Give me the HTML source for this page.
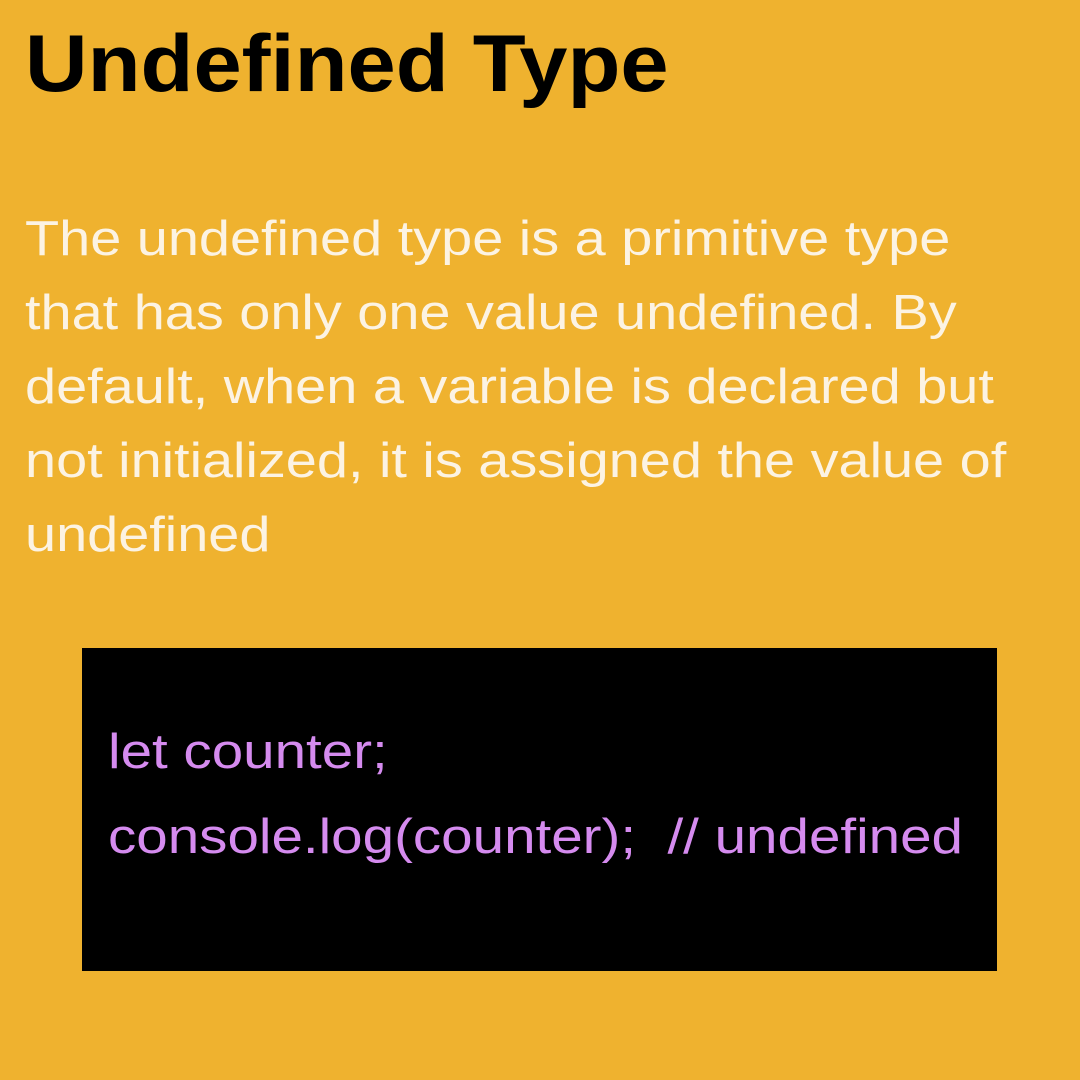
<!DOCTYPE html>
<html><head><meta charset="utf-8"><style>
html,body{margin:0;padding:0}
body{width:1080px;height:1080px;background:#EFB22F;position:relative;overflow:hidden;font-family:"Liberation Sans",sans-serif}
.t{position:absolute;left:25px;top:24px;font-size:81px;font-weight:bold;color:#000;white-space:nowrap;line-height:1;transform:scaleX(1.07);transform-origin:0 0}
.p{position:absolute;left:25px;top:202px;font-size:49px;color:#FCF3E3;line-height:74px;white-space:nowrap;transform:scaleX(1.14);transform-origin:0 0}
.box{position:absolute;left:82px;top:648px;width:915px;height:323px;background:#000}
.c{position:absolute;left:108px;top:710px;font-size:49px;color:#D58BEF;line-height:85px;white-space:pre;transform:scaleX(1.154);transform-origin:0 0}
</style></head><body>
<div class="t">Undefined Type</div>
<div class="p">The undefined type is a primitive type<br>that has only one value undefined. By<br>default, when a variable is declared but<br>not initialized, it is assigned the value of<br>undefined</div>
<div class="box"></div>
<div class="c">let counter;
console.log(counter);  // undefined</div>
</body></html>
